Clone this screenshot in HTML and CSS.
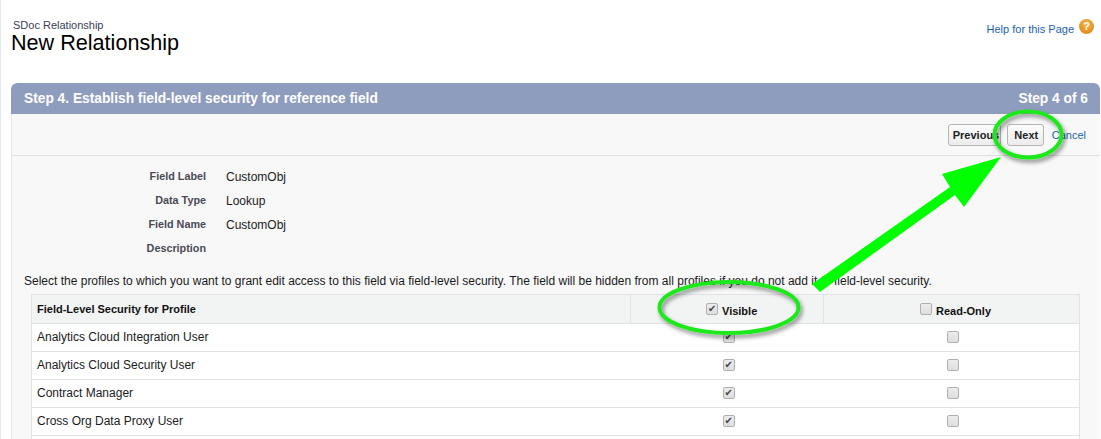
FILE: index.html
```html
<!DOCTYPE html>
<html lang="en">

<head>
	<meta charset="UTF-8">
	<title>New Relationship</title>
	<link rel="stylesheet" href="styles.css">
</head>

<body>
	<div class="page">
		<div class="page-head">
			<div class="titles">
				<div class="object-type">SDoc Relationship</div>
				<h1>New Relationship</h1>
			</div>
			<div class="help">
				<a href="#">Help for this Page</a>
				<span class="help-icon">?</span>
			</div>
		</div>

		<div class="panel">
			<div class="panel-head">
				<h2>Step 4. Establish field-level security for reference field</h2>
				<span class="step">Step 4 of 6</span>
			</div>

			<div class="toolbar">
				<button class="btn btn-prev">Previous</button>
				<button class="btn btn-next">Next</button>
				<a href="#" class="cancel">Cancel</a>
			</div>

			<div class="fields">
				<div class="field-label">Field Label</div>
				<div class="field-value">CustomObj</div>
				<div class="field-label">Data Type</div>
				<div class="field-value">Lookup</div>
				<div class="field-label">Field Name</div>
				<div class="field-value">CustomObj</div>
				<div class="field-label">Description</div>
				<div class="field-value"></div>
			</div>

			<p class="intro">Select the profiles to which you want to grant edit access to this field via field-level security. The field will be hidden from all profiles if you do not add it to field-level security.</p>

			<table class="profiles">
				<tr>
					<th class="col-name">Field-Level Security for Profile</th>
					<th class="col-check col-visible"><input type="checkbox" checked><span>Visible</span></th>
					<th class="col-check col-read"><input type="checkbox"><span>Read-Only</span></th>
				</tr>
				<tr>
					<td>Analytics Cloud Integration User</td>
					<td class="check"><input type="checkbox" checked></td>
					<td class="check"><input type="checkbox"></td>
				</tr>
				<tr>
					<td>Analytics Cloud Security User</td>
					<td class="check"><input type="checkbox" checked></td>
					<td class="check"><input type="checkbox"></td>
				</tr>
				<tr>
					<td>Contract Manager</td>
					<td class="check"><input type="checkbox" checked></td>
					<td class="check"><input type="checkbox"></td>
				</tr>
				<tr>
					<td>Cross Org Data Proxy User</td>
					<td class="check"><input type="checkbox" checked></td>
					<td class="check"><input type="checkbox"></td>
				</tr>
				<tr>
					<td>&nbsp;</td>
					<td class="check"></td>
					<td class="check"></td>
				</tr>
			</table>
		</div>
	</div>

	<!-- green callouts drawn on top of the screenshot -->
	<svg class="callouts" width="1101" height="439" viewBox="0 0 1101 439">
		<defs>
			<filter id="shadow" x="-20%" y="-20%" width="140%" height="150%">
				<feDropShadow dx="2" dy="3" stdDeviation="2" flood-color="#000" flood-opacity="0.45"/>
			</filter>
		</defs>
		<polygon points="812,284 950,187 942,174 1001,157 964,207 955,195 820,292" fill="#00ff00"/>
		<ellipse cx="1028" cy="134.500" rx="33.500" ry="23" fill="none" stroke="#1ee81a" stroke-width="4" filter="url(#shadow)"/>
		<ellipse cx="729" cy="307.500" rx="69.500" ry="25.500" fill="none" stroke="#1ee81a" stroke-width="4" filter="url(#shadow)"/>
	</svg>
</body>

</html>
```

FILE: styles.css
```css
html,
body {
	margin: 0;
	padding: 0;
	height: 439px;
	overflow: hidden;
	background: white;
	font-family: "Liberation Sans", Arial, sans-serif;
	font-size: 12px;
	color: #1a1a22;
}

.page {
	box-sizing: border-box;
	height: 439px;
	padding: 19px 1px 0 10px;
	border-left: 1px solid #e4e8f0;
}

.page-head {
	display: flex;
	justify-content: space-between;
	height: 64px;
}

.object-type {
	margin-left: 2px;
	font-size: 11px;
	line-height: 13px;
	color: #3b3f57;
}

h1 {
	margin: 0;
	font-size: 21.600px;
	line-height: 22px;
	font-weight: normal;
	color: #000;
}

.help {
	display: flex;
	align-items: flex-start;
	gap: 5px;
	margin-right: 6px;
	font-size: 11px;
}

.help a {
	margin-top: 4px;
	color: #1a62b0;
	text-decoration: none;
}

.help-icon {
	width: 15px;
	height: 15px;
	border-radius: 50%;
	background: radial-gradient(circle at 50% 35%, #f7b548, #d97f10);
	color: white;
	font-size: 11px;
	font-weight: bold;
	line-height: 15px;
	text-align: center;
}

.panel {
	height: 356px;
	overflow: hidden;
	background: #f8f8f8;
	box-shadow: inset 1px 0 0 #e6e6e6;
	border-radius: 6px 6px 0 0;
}

.panel-head {
	display: flex;
	justify-content: space-between;
	align-items: center;
	height: 31px;
	padding: 0 12px 0 13px;
	background: #8e9dbe;
	border-radius: 6px 6px 0 0;
	color: white;
	font-size: 13.750px;
	font-weight: bold;
}

h2 {
	margin: 0;
	font-size: 13.750px;
}

.toolbar {
	display: flex;
	justify-content: flex-end;
	align-items: center;
	height: 41px;
	padding-right: 14px;
	border-bottom: 1px solid #dfdfdf;
}

.btn {
	height: 22px;
	margin-right: 6px;
	border: 1px solid #b5b5b5;
	border-radius: 3px;
	background: linear-gradient(#fdfdfd, #ececec);
	font-family: inherit;
	font-size: 11px;
	font-weight: bold;
	color: #222;
}

.btn-prev {
	width: 53px;
	padding: 0 0 0 4px;
	text-align: left;
}

.btn-next {
	width: 37px;
	padding: 0 0 0 2px;
}

.cancel {
	margin-left: 2px;
	font-size: 11px;
	color: #1a62b0;
	text-decoration: none;
}

.fields {
	display: grid;
	grid-template-columns: 195px 1fr;
	grid-auto-rows: 24px;
	column-gap: 20px;
	align-items: center;
	padding-top: 8px;
}

.field-label {
	text-align: right;
	font-size: 10.800px;
	font-weight: bold;
	color: #4a4a56;
}

.field-value {
	padding-top: 1px;
}

.intro {
	margin: 14px 0 6px 13px;
	line-height: 14px;
}

.profiles {
	width: 1049px;
	margin-left: 20px;
	border-collapse: collapse;
	table-layout: fixed;
	background: white;
	border: 1px solid #e0e3e5;
}

.profiles th {
	height: 29px;
	padding: 0 0 0 5px;
	box-sizing: border-box;
	background: #f2f3f3;
	border-bottom: 1px solid #e0e3e5;
	border-left: 1px solid #e0e3e5;
	font-size: 11px;
	text-align: left;
	color: #111;
}

.profiles td {
	box-sizing: border-box;
	height: 28px;
	padding: 0 0 2px 5px;
	border-bottom: 1px solid #e3e3e3;
}

.col-name {
	width: 599px;
}

.profiles th.col-check {
	padding: 0;
	white-space: nowrap;
}

.profiles th.col-visible {
	width: 193px;
	padding-left: 75px;
}

.profiles th.col-read {
	padding-left: 96px;
}

.profiles th span {
	margin-left: 4px;
	font-size: 11px;
	vertical-align: -3px;
}

.profiles td.check {
	text-align: center;
	padding: 0 0 2px 3px;
}

input[type=checkbox] {
	appearance: none;
	position: relative;
	box-sizing: border-box;
	margin: 0;
	width: 12px;
	height: 12px;
	border: 1px solid #b0b0b0;
	border-radius: 2px;
	background: linear-gradient(#ececec, #dedede);
	vertical-align: middle;
}

input[type=checkbox]:checked::before {
	content: "\2714";
	position: absolute;
	top: -1px;
	left: 1px;
	font-family: "DejaVu Sans", sans-serif;
	font-size: 10px;
	line-height: 12px;
	color: #444;
}

.callouts {
	position: absolute;
	top: 0;
	left: 0;
}
```
